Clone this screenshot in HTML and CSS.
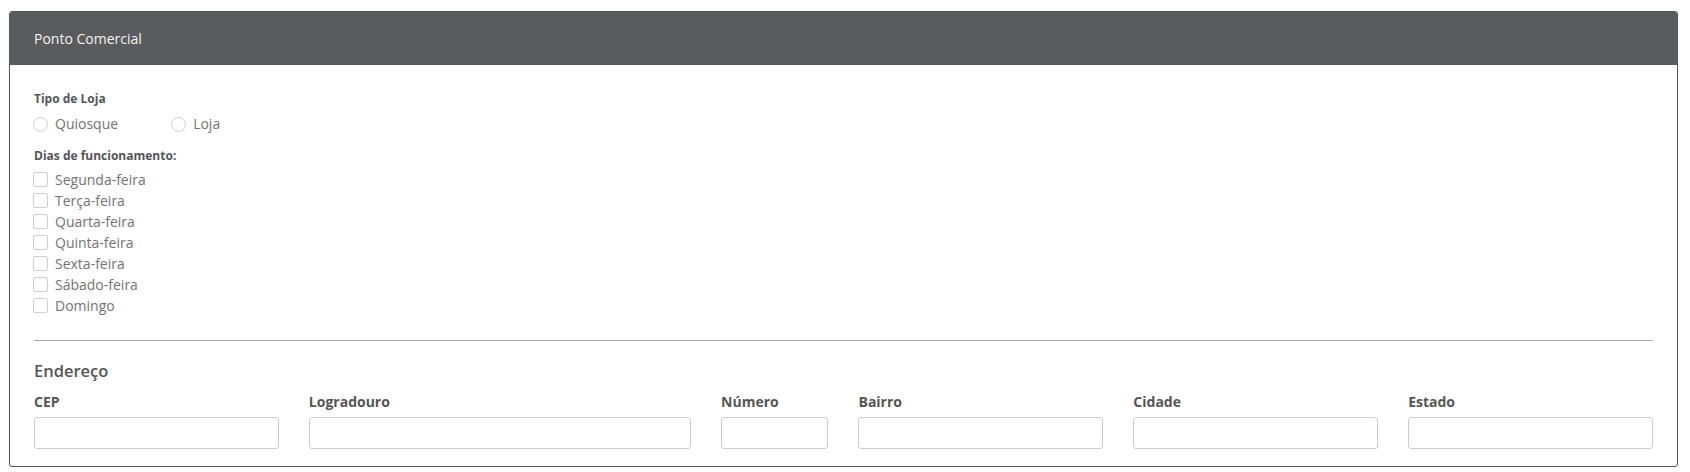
FILE: index.html
```html
<!DOCTYPE html>
<html lang="pt-BR">
<head>
<meta charset="utf-8">
<title>Ponto Comercial</title>
<link rel="stylesheet" href="styles.css">
</head>
<body>
<section class="card">
  <header class="card-header">Ponto Comercial</header>
  <div class="card-body">
    <div class="field-label">Tipo de Loja</div>
    <div class="radio-row">
      <label class="option"><span class="radio"></span>Quiosque</label>
      <label class="option"><span class="radio"></span>Loja</label>
    </div>
    <div class="field-label days-label">Dias de funcionamento:</div>
    <ul class="check-list">
      <li class="option"><span class="check"></span>Segunda-feira</li>
      <li class="option"><span class="check"></span>Terça-feira</li>
      <li class="option"><span class="check"></span>Quarta-feira</li>
      <li class="option"><span class="check"></span>Quinta-feira</li>
      <li class="option"><span class="check"></span>Sexta-feira</li>
      <li class="option"><span class="check"></span>Sábado-feira</li>
      <li class="option"><span class="check"></span>Domingo</li>
    </ul>
    <hr class="divider">
    <h3 class="section-title">Endereço</h3>
    <div class="address-grid">
      <div class="col span-2"><label class="input-label">CEP</label><div class="input"></div></div>
      <div class="col span-3"><label class="input-label">Logradouro</label><div class="input"></div></div>
      <div class="col span-1"><label class="input-label">Número</label><div class="input"></div></div>
      <div class="col span-2"><label class="input-label">Bairro</label><div class="input"></div></div>
      <div class="col span-2"><label class="input-label">Cidade</label><div class="input"></div></div>
      <div class="col span-2"><label class="input-label">Estado</label><div class="input"></div></div>
    </div>
  </div>
</section>
</body>
</html>
```
FILE: styles.css
```css
html, body {
  margin: 0;
  background: #ffffff;
}
body {
  padding: 11px 12px 0 9px;
  font-family: "Open Sans", "Noto Sans", sans-serif;
  color: #555;
}
.card {
  border: 1px solid #545556;
  border-radius: 3px;
  background: #fff;
  box-shadow: 0 1px 2px rgba(0, 0, 0, 0.08);
  overflow: hidden;
}
.card-header {
  height: 53px;
  display: flex;
  align-items: center;
  padding-left: 24px;
  background: #5a5b5d;
  color: #f4f4f4;
  font-size: 14px;
}
.card-body {
  padding: 26px 24px 17px 24px;
}
.field-label {
  font-size: 12px;
  line-height: 16px;
  font-weight: 700;
  color: #555;
}
.radio-row {
  display: flex;
  gap: 54px;
  margin-top: 7px;
}
.option {
  display: flex;
  align-items: center;
  gap: 7px;
  font-size: 14px;
  line-height: 20px;
  color: #737373;
}
.radio-row .option {
  margin-left: -1px;
}
.radio {
  width: 13px;
  height: 13px;
  border: 1px solid #cfcfcf;
  border-radius: 50%;
  background: #fff;
}
.days-label {
  margin-top: 14px;
}
.check-list {
  list-style: none;
  margin: 5px 0 0 0;
  padding: 0;
}
.check-list .option {
  line-height: 21px;
  margin-left: -1px;
}
.check {
  width: 13px;
  height: 13px;
  border: 1px solid #cfcfcf;
  border-radius: 2px;
  background: #fff;
}
.divider {
  border: 0;
  border-top: 1px solid #aaaaaa;
  margin: 24px 0 0 0;
}
.section-title {
  margin: 19px 0 0 0;
  font-size: 16.5px;
  line-height: 22px;
  font-weight: 600;
  color: #555;
}
.address-grid {
  display: grid;
  grid-template-columns: repeat(12, 1fr);
  column-gap: 30px;
  margin-top: 11px;
}
.span-1 { grid-column: span 1; }
.span-2 { grid-column: span 2; }
.span-3 { grid-column: span 3; }
.input-label {
  display: block;
  font-size: 14px;
  line-height: 18px;
  font-weight: 700;
  color: #555;
}
.input {
  margin-top: 6px;
  height: 30px;
  border: 1px solid #cccccc;
  border-radius: 3px;
  background: #fff;
}
```
